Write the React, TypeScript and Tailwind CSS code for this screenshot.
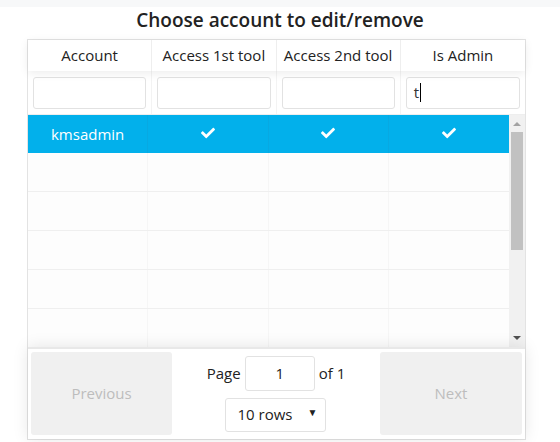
import { FaCheck } from 'react-icons/fa';

const headers = ['Account', 'Access 1st tool', 'Access 2nd tool', 'Is Admin'];
const filters = ['', '', '', 't'];

export default function App() {
  const font = { fontFamily: '"Open Sans", "Noto Sans", sans-serif' };
  return (
    <div className="h-[442px] w-[560px] overflow-hidden bg-white text-[#222]" style={font}>
      <div className="h-[7px] bg-[#f7f8f9]" />
      <h2 className="flex h-[32px] items-center justify-center pb-[5px] text-[19px] font-semibold text-[#222]">
        Choose account to edit/remove
      </h2>

      <div className="ml-[27px] flex w-[499px] flex-col border border-[#e3e3e3]">
        {/* header */}
        <div className="relative z-10 grid h-[31px] grid-cols-4 shadow-[0_2px_10px_0_rgba(0,0,0,0.08)]">
          {headers.map((h, i) => (
            <div
              key={h}
              className={`flex items-center justify-center text-[15px] ${i < 3 ? 'border-r border-[#eee]' : ''}`}
            >
              {h}
            </div>
          ))}
        </div>

        {/* filters */}
        <div className="grid h-[44px] grid-cols-4 border-b border-[#eee]">
          {filters.map((f, i) => (
            <div key={i} className={`flex items-center px-[5px] ${i < 3 ? 'border-r border-[#f3f3f3]' : ''}`}>
              <div className="flex h-[32px] w-full items-center rounded-[3px] border border-[#e2e2e2] bg-white px-[7px] text-[15px] text-[#333]">
                {f}
                {f && <span className="ml-[1px] h-[19px] w-[1px] bg-black" />}
              </div>
            </div>
          ))}
        </div>

        {/* body */}
        <div className="flex h-[232px]">
          <div className="flex flex-1 flex-col overflow-hidden bg-[#fdfdfd]">
            <div className="grid h-[38px] shrink-0 grid-cols-4 bg-[#02b0eb] text-white">
              <div className="flex items-center justify-center border-r border-[#07a9e2] text-[15px]">kmsadmin</div>
              {[0, 1, 2].map((i) => (
                <div key={i} className={`flex items-start justify-center pt-[11px] ${i < 2 ? 'border-r border-[#07a9e2]' : ''}`}>
                  <FaCheck className="h-[14px] w-[16px]" />
                </div>
              ))}
            </div>
            {[0, 1, 2, 3, 4].map((r) => (
              <div key={r} className="grid h-[39px] shrink-0 grid-cols-4 border-b border-[#efefef]">
                {[0, 1, 2, 3].map((c) => (
                  <div key={c} className={c < 3 ? 'border-r border-[#f6f6f6]' : ''} />
                ))}
              </div>
            ))}
          </div>
          {/* scrollbar */}
          <div className="flex w-[16px] flex-col items-center bg-[#f1f1f1]">
            <div className="mt-[7px] h-0 w-0 border-x-[4px] border-b-[4px] border-x-transparent border-b-[#a3a3a3]" />
            <div className="mt-[6px] h-[118px] w-[12px] bg-[#c1c1c1]" />
            <div className="mt-auto mb-[7px] h-0 w-0 border-x-[4px] border-t-[4px] border-x-transparent border-t-[#505050]" />
          </div>
        </div>

        {/* pagination */}
        <div className="relative flex h-[92px] items-stretch justify-between border-t-2 border-[#e8e8e8] px-[3px] pt-[3px] pb-[4px] shadow-[0_0_15px_0_rgba(0,0,0,0.1)]">
          <button className="w-[141px] rounded-[3px] bg-[#f0f0f0] text-[15px] text-[#bdbdbd]">Previous</button>
          <div className="flex flex-col items-center justify-center gap-[7px] text-[15px] text-[#222]">
            <div className="flex items-center gap-[4px]">
              <span>Page</span>
              <div className="flex h-[35px] w-[70px] items-center justify-center rounded-[3px] border border-[#e2e2e2] bg-white">1</div>
              <span>of 1</span>
            </div>
            <div className="flex h-[34px] w-[101px] items-center justify-between rounded-[3px] border border-[#e2e2e2] bg-white pl-[11px] pr-[8px]">
              <span>10 rows</span>
              <span className="mb-[4px] text-[10px]">▼</span>
            </div>
          </div>
          <button className="w-[142px] rounded-[3px] bg-[#f0f0f0] text-[15px] text-[#bdbdbd]">Next</button>
        </div>
      </div>
    </div>
  );
}
